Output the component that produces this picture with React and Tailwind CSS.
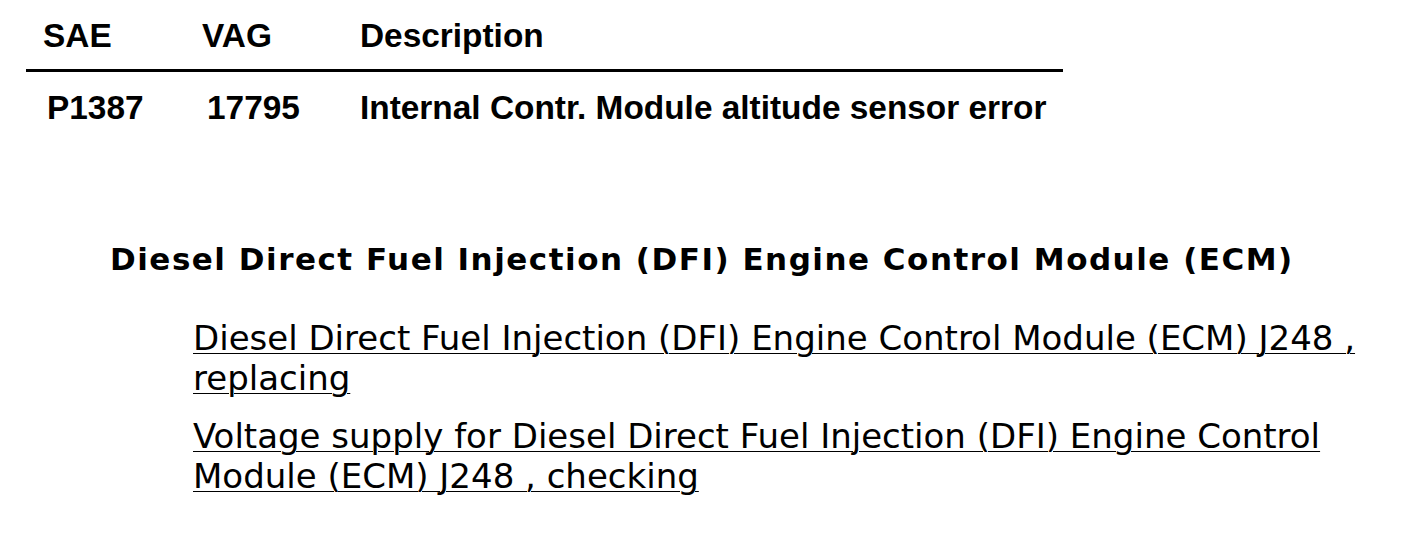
export default function App() {
  const links = [
    "Diesel Direct Fuel Injection (DFI) Engine Control Module (ECM) J248 , replacing",
    "Voltage supply for Diesel Direct Fuel Injection (DFI) Engine Control Module (ECM) J248 , checking",
  ];

  return (
    <div className="w-[1408px] h-[534px] bg-white text-black overflow-hidden">
      <div className="w-[1037px] ml-[26px] pt-[16px] font-['Liberation_Sans',Arial,sans-serif] font-bold text-[33.4px] leading-[40px]">
        <div className="flex border-b-[3px] border-black pb-[13px]">
          <div className="w-[176px] pl-[17px]">SAE</div>
          <div className="w-[158px]">VAG</div>
          <div>Description</div>
        </div>
        <div className="flex pt-[16px]">
          <div className="w-[176px] pl-[21px]">P1387</div>
          <div className="w-[158px] pl-[5px]">17795</div>
          <div>Internal Contr. Module altitude sensor error</div>
        </div>
      </div>

      <div className="mt-[111px] pl-[110px] font-['DejaVu_Sans',sans-serif] font-bold text-[31px] tracking-[1.5px] leading-[40px]">
        Diesel Direct Fuel Injection (DFI) Engine Control Module (ECM)
      </div>

      <div className="mt-[39px] pl-[193px] pr-[30px] font-['DejaVu_Sans',sans-serif] text-[34px] leading-[40px] flex flex-col gap-[18px]">
        {links.map((text, i) => (
          <a key={i} href="#" className="underline decoration-1 underline-offset-[3px]">
            {text}
          </a>
        ))}
      </div>
    </div>
  );
}
